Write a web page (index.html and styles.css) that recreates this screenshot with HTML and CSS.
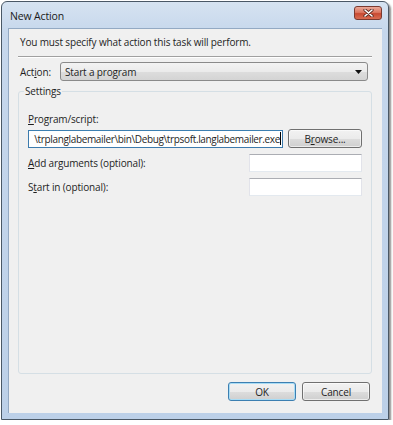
FILE: index.html
```html
<!DOCTYPE html>
<html lang="en">
<head>
    <meta charset="UTF-8">
    <meta name="viewport" content="width=device-width, initial-scale=1.0">
    <title>New Action</title>
    <link rel="stylesheet" href="styles.css">
</head>
<body>
    <div class="window">
        <div class="titlebar">
            <span class="title">New Action</span>
            <div class="close-btn">
                <svg width="11" height="8" viewBox="0 0 11 8">
                    <path d="M2 1 L9 7 M9 1 L2 7" stroke="#5a2a22" stroke-width="3.2" stroke-linecap="round"/>
                    <path d="M2 1 L9 7 M9 1 L2 7" stroke="#ffffff" stroke-width="1.6" stroke-linecap="round"/>
                </svg>
            </div>
        </div>
        <div class="client">
            <p class="intro">You must specify what action this task will perform.</p>
            <div class="separator"></div>

            <div class="action-row">
                <span class="label">Act<u>i</u>on:</span>
                <div class="combo">
                    <span>Start a program</span>
                    <svg class="arrow" width="7" height="4" viewBox="0 0 7 4"><path d="M0 0 H7 L3.5 4 Z" fill="#111"/></svg>
                </div>
            </div>

            <fieldset class="group">
                <legend>Settings</legend>
                <div class="label prog-label"><u>P</u>rogram/script:</div>
                <div class="prog-row">
                    <div class="textbox focused">
                        <span class="value">\trplanglabemailer\bin\Debug\trpsoft.langlabemailer.exe</span><span class="caret"></span>
                    </div>
                    <div class="button browse">B<u>r</u>owse...</div>
                </div>
                <div class="field-row">
                    <span class="label"><u>A</u>dd arguments (optional):</span>
                    <div class="textbox small"></div>
                </div>
                <div class="field-row">
                    <span class="label">S<u>t</u>art in (optional):</span>
                    <div class="textbox small"></div>
                </div>
            </fieldset>

            <div class="footer">
                <div class="button default">OK</div>
                <div class="button">Cancel</div>
            </div>
        </div>
    </div>
</body>
</html>
```

FILE: styles.css
```css
body {
    margin: 0;
    padding: 1px 0 0 1px;
    background-color: #ffffff;
    font-family: "Open Sans", "Noto Sans", sans-serif;
    font-size: 10px;
    letter-spacing: -0.15px;
    color: #1e1e1e;
}

.window {
    border: 1px solid #4a5866;
    border-radius: 6px 6px 0 0;
    background: linear-gradient(to bottom, #d6e3f1 0px, #c6d7ec 30px, #bcd0e8 100%);
    box-shadow: 2px 2px 2px rgba(0, 0, 0, 0.45);
    padding: 0 6px 6px 6px;
    box-sizing: content-box;
    width: 374px;
    height: 411px;
}

.titlebar {
    height: 26px;
    display: flex;
    align-items: center;
    justify-content: space-between;
    padding-left: 2px;
}

.title {
    font-size: 10.5px;
    color: #1a1a1a;
    margin-top: 2px;
}

.close-btn {
    width: 26px;
    height: 12px;
    margin-top: -4px;
    border: 1px solid #7a3a30;
    border-radius: 3px;
    background: linear-gradient(to bottom, #eaa898 0%, #dc7761 45%, #c84a32 55%, #d86c52 100%);
    display: flex;
    align-items: center;
    justify-content: center;
}

.client {
    height: 384px;
    background-color: #f0f0f0;
    border: 1px solid #93a9c3;
    border-right: none;
    border-bottom: none;
    position: relative;
}

.intro {
    margin: 0;
    padding: 6px 0 0 11px;
    height: 15px;
    line-height: 15px;
}

.separator {
    margin: 6px 10px 0 9px;
    border-top: 1px solid #a0a0a0;
    border-bottom: 1px solid #ffffff;
}

.action-row {
    display: flex;
    align-items: center;
    margin-top: 4px;
    padding-left: 11px;
}

.action-row .label {
    width: 40px;
}

.combo {
    width: 297px;
    height: 17px;
    border: 1px solid #8a8a8a;
    border-radius: 3px;
    background: linear-gradient(to bottom, #f3f3f3 0%, #ebebeb 50%, #dddddd 51%, #d4d4d4 100%);
    display: flex;
    align-items: center;
    justify-content: space-between;
    padding: 0 5px 0 4px;
}

.group {
    margin: 4px 10px 0 9px;
    padding: 0 9px 0 9px;
    height: 287px;
    border: 1px solid #d5dfe5;
    border-radius: 3px;
}

.group legend {
    padding: 0 1px;
    margin-left: -4px;
    line-height: 13px;
}

.prog-label {
    margin-top: 14px;
    line-height: 15px;
}

.prog-row {
    display: flex;
    align-items: center;
    gap: 5px;
    margin-top: 2px;
}

.textbox {
    height: 16px;
    background: #ffffff;
    border: 1px solid #e2e3ea;
    border-top-color: #abadb3;
    border-bottom-color: #e3e9ef;
    box-sizing: content-box;
}

.textbox.focused {
    width: 252px;
    border-color: #3d7bad;
    border-top-color: #3c7fb1;
    display: flex;
    justify-content: flex-end;
    align-items: center;
    overflow: hidden;
    white-space: nowrap;
    padding-right: 1px;
}

.textbox.focused .value {
    letter-spacing: -0.35px;
}

.caret {
    width: 1px;
    height: 13px;
    background: #000;
    flex-shrink: 0;
}

.textbox.small {
    width: 111px;
    height: 16px;
}

.field-row {
    display: flex;
    align-items: center;
    justify-content: space-between;
    margin-top: 6px;
}

.button {
    height: 17px;
    border: 1px solid #707070;
    border-radius: 3px;
    background: linear-gradient(to bottom, #f2f2f2 0%, #ebebeb 50%, #dddddd 51%, #cfcfcf 100%);
    display: flex;
    align-items: center;
    justify-content: center;
    box-shadow: inset 0 0 0 1px rgba(255, 255, 255, 0.6);
}

.browse {
    width: 72px;
}

.footer {
    position: absolute;
    right: 12px;
    bottom: 12px;
    display: flex;
    gap: 6px;
}

.footer .button {
    width: 66px;
}

.button.default {
    border-color: #3c7fb1;
    box-shadow: inset 0 0 0 1px #a8dcf5;
}
```
